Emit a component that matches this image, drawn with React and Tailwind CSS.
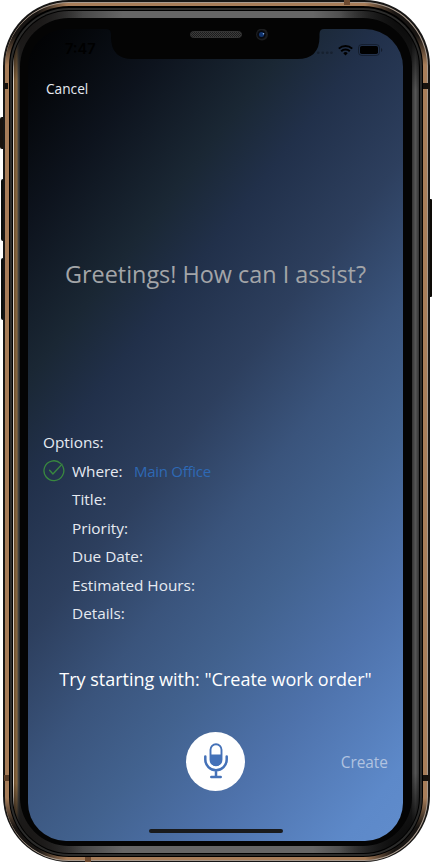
import React from "react";

const fields = ["Title:", "Priority:", "Due Date:", "Estimated Hours:", "Details:"];

function StatusBar() {
  return (
    <div className="flex h-[41px] items-center justify-between pl-[37px] pr-[20px]">
      <span className="font-['Inter',sans-serif] text-[14.5px] leading-none font-semibold text-black">7:47</span>
      <div className="flex items-center text-black">
        <svg width="18" height="4" viewBox="0 0 18 4" className="mt-[7px] fill-black/25">
          <rect x="1" y="0.5" width="2.5" height="2.5" rx="0.8" />
          <rect x="5.5" y="0.5" width="2.5" height="2.5" rx="0.8" />
          <rect x="10" y="0.5" width="2.5" height="2.5" rx="0.8" />
          <rect x="14.2" y="0.5" width="2.5" height="2.5" rx="0.8" />
        </svg>
        <svg width="15" height="12" viewBox="0 0 15 12" className="ml-[4px]" fill="none" stroke="currentColor" strokeWidth="2">
          <path d="M0.8 4.6a9.6 9.6 0 0 1 13.4 0" />
          <path d="M3.2 7.3a6.1 6.1 0 0 1 8.6 0" />
          <path d="M7.5 11.4 5.3 9.2a3.1 3.1 0 0 1 4.4 0z" fill="currentColor" stroke="none" />
        </svg>
        <svg width="25" height="12" viewBox="0 0 25 12" className="ml-[5px]">
          <rect x="0.5" y="0.5" width="21" height="11" rx="3.2" fill="none" stroke="black" strokeOpacity="0.35" />
          <rect x="2" y="2" width="18" height="8" rx="1.8" />
          <path d="M23 4v4q1.3-.5 1.3-2T23 4z" fillOpacity="0.4" />
        </svg>
      </div>
    </div>
  );
}

function Notch() {
  return (
    <div className="absolute top-0 left-[78px] h-[30px] w-[218px]">
      <svg width="218" height="30" viewBox="0 0 218 30" className="absolute inset-0">
        <defs>
          <pattern id="mesh" width="2" height="2" patternUnits="userSpaceOnUse">
            <rect width="2" height="2" fill="#1c1c1c" />
            <rect width="1" height="1" fill="#3c3c3c" />
            <rect x="1" y="1" width="1" height="1" fill="#3c3c3c" />
          </pattern>
        </defs>
        <path d="M0-1V0Q5 0 5 5V8Q5 30 27 30H191Q213.500 30 213.500 8V5Q213.500 0 218 0V-1Z" fill="#040404" />
        <rect x="84.500" y="2.500" width="51" height="6" rx="3" fill="url(#mesh)" stroke="#333" />
        <circle cx="156" cy="5.500" r="6" fill="#1c1d1f" />
        <circle cx="155.500" cy="5.500" r="4.300" fill="#07090f" />
        <circle cx="155.500" cy="5.500" r="2.500" fill="#11346f" />
        <circle cx="157.500" cy="4.800" r="0.800" fill="#8fb8ee" />
      </svg>
    </div>
  );
}

function CheckIcon() {
  return (
    <svg width="22" height="22" viewBox="0 0 22 22" fill="none" stroke="#39883f" strokeWidth="1.300" strokeLinecap="round" strokeLinejoin="round">
      <path d="M17.800 3.600A9.900 9.900 0 1 0 19.500 5.800" />
      <path d="M6.600 10.200 9.900 14 19 4.200" />
    </svg>
  );
}

function MicIcon() {
  return (
    <svg width="26" height="38" viewBox="0 0 26 38" fill="none" stroke="#4471b8" strokeWidth="2.500" strokeLinecap="round">
      <rect x="7.500" y="2.300" width="11" height="21" rx="5.500" strokeWidth="1.900" />
      <path d="M7 12.500H19V18a6 6 0 0 1-12 0Z" fill="#4471b8" stroke="none" />
      <path d="M2.300 14.500V17.500a10.700 10.700 0 0 0 21.400 0V14.500M13 28.500V35M8.300 35H17.700" />
    </svg>
  );
}

function Screen() {
  return (
    <main className="relative flex h-[812px] w-[375px] flex-col overflow-hidden rounded-[38px] bg-[linear-gradient(128deg,#010102_0%,#040609_5%,#0d131d_15%,#1a2734_27%,#21304a_35%,#2d3f5e_47%,#3a547c_58%,#42628f_68%,#4e72ab_80%,#5d89c9_94%,#608ccc_100%)] font-['Open_Sans',sans-serif] text-[#e6eaf1]">
      <StatusBar />
      <Notch />
      <button className="mt-[9px] ml-[18px] h-[20px] self-start text-[13.700px] leading-[20px]">Cancel</button>
      <h1 className="mt-[158px] text-center text-[23.400px] leading-[34px] text-[#a3a5a8]">Greetings! How can I assist?</h1>
      <section className="mt-[137px] pl-[15px] text-[15.350px] leading-[28.500px]">
        <p>Options:</p>
        <div className="flex items-center">
          <CheckIcon />
          <span className="ml-[7px] w-[50px] tracking-[-0.1px]">Where:</span>
          <span className="ml-[12px] text-[15px] tracking-[-0.28px] text-[#2e69b5]">Main Office</span>
        </div>
        <ul className="pl-[29px]">
          {fields.map((f) => (
            <li key={f}>{f}</li>
          ))}
        </ul>
      </section>
      <p className="mt-[38px] text-center text-[18px] leading-[26px] text-white">Try starting with: "Create work order"</p>
      <div className="mt-[40px] grid h-[59px] grid-cols-[1fr_59px_1fr] items-center">
        <button className="col-start-2 flex h-[59px] w-[59px] items-center justify-center rounded-full bg-white">
          <MicIcon />
        </button>
        <button className="mt-[3px] mr-[15px] justify-self-end text-[15.400px] leading-[22px] text-[#b1c3e0]">Create</button>
      </div>
      <div className="mx-auto mt-[38px] h-[4px] w-[134px] rounded-full bg-[#191a1c]" />
    </main>
  );
}

export default function App() {
  return (
    <div className="relative h-[863px] w-[432px] overflow-hidden bg-white">
      <div className="absolute top-[117px] left-0 h-[32px] w-[5px] rounded-l-[2px] bg-[#17120e]" />
      <div className="absolute top-[179px] left-[1px] h-[62px] w-[4px] rounded-l-[2px] bg-[#0a0f0e]" />
      <div className="absolute top-[258px] left-[1px] h-[62px] w-[4px] rounded-l-[2px] bg-[#0a0f0e]" />
      <div className="absolute top-[199px] right-0 h-[98px] w-[4px] rounded-r-[1px] bg-[#0d0a07]" />
      <div className="relative ml-[3px] h-[862px] w-[427px] rounded-[66px] bg-[#171615] pt-[2px] pr-[2px] pb-[1px] pl-[2px]">
        <div className="h-[859px] w-[423px] rounded-[64px] border-t border-r border-b border-[#a89a8e] bg-[radial-gradient(circle_at_0_0,#171412_34px,transparent_62px),radial-gradient(circle_at_100%_0,#171412_34px,transparent_62px),radial-gradient(circle_at_0_100%,#171412_34px,transparent_62px),radial-gradient(circle_at_100%_100%,#171412_34px,transparent_62px),linear-gradient(#a77d59,#a77d59)] pt-[3px] pl-[4px]">
          <div className="h-[851px] w-[414px] rounded-[60px] bg-black pt-[2px] pl-[1px]">
            <div className="h-[848px] w-[412px] rounded-[59px] bg-[#2b2b2a] pt-[2px] pl-[2px]">
              <div className="h-[844px] w-[408px] rounded-[57px] bg-black pt-[1px] pl-[1px]">
                <div className="h-[842px] w-[406px] rounded-[56px] bg-[radial-gradient(circle_at_0_0,#1a1817_25px,transparent_70px),radial-gradient(circle_at_100%_0,#0d0d0d_25px,transparent_80px),radial-gradient(circle_at_0_100%,#1a1817_25px,transparent_70px),radial-gradient(circle_at_100%_100%,#0d0d0d_25px,transparent_80px),linear-gradient(to_right,#d8cdc0_0,#d8cdc0_1px,#6b4d2c_1px,#8b6a42_4px,#4a4843_5px,#242424_7px),linear-gradient(to_right,#333,#565656_50%,#333),linear-gradient(to_right,#222_20px,#666_110px,#666_300px,#222_385px)] bg-[size:100%_100%,100%_100%,100%_100%,100%_100%,7px_780px,7px_780px,100%_100%] bg-[position:0_0,0_0,0_0,0_0,0_50%,100%_50%,0_0] bg-no-repeat pt-[7px] pl-[7px]">
                  <div className="h-[828px] w-[392px] rounded-[49px] bg-[#040404] pt-[11px] pl-[8px]">
                    <Screen />
                  </div>
                </div>
              </div>
            </div>
          </div>
        </div>
        <div className="absolute top-[83px] left-[1px] h-[6px] w-[4px] bg-[#17120e]" />
        <div className="absolute top-[83px] right-0 h-[6px] w-[7px] bg-[#17120e]" />
        <div className="absolute top-[775px] left-[1px] h-[6px] w-[5px] bg-[#5a3d27]" />
        <div className="absolute top-[775px] right-0 h-[6px] w-[7px] bg-[#17120e]" />
        <div className="absolute top-0 left-[341px] h-[5px] w-[6px] bg-[#6d4a30]" />
        <div className="absolute bottom-0 left-[82px] h-[5px] w-[6px] bg-[#6d4a30]" />
      </div>
    </div>
  );
}
